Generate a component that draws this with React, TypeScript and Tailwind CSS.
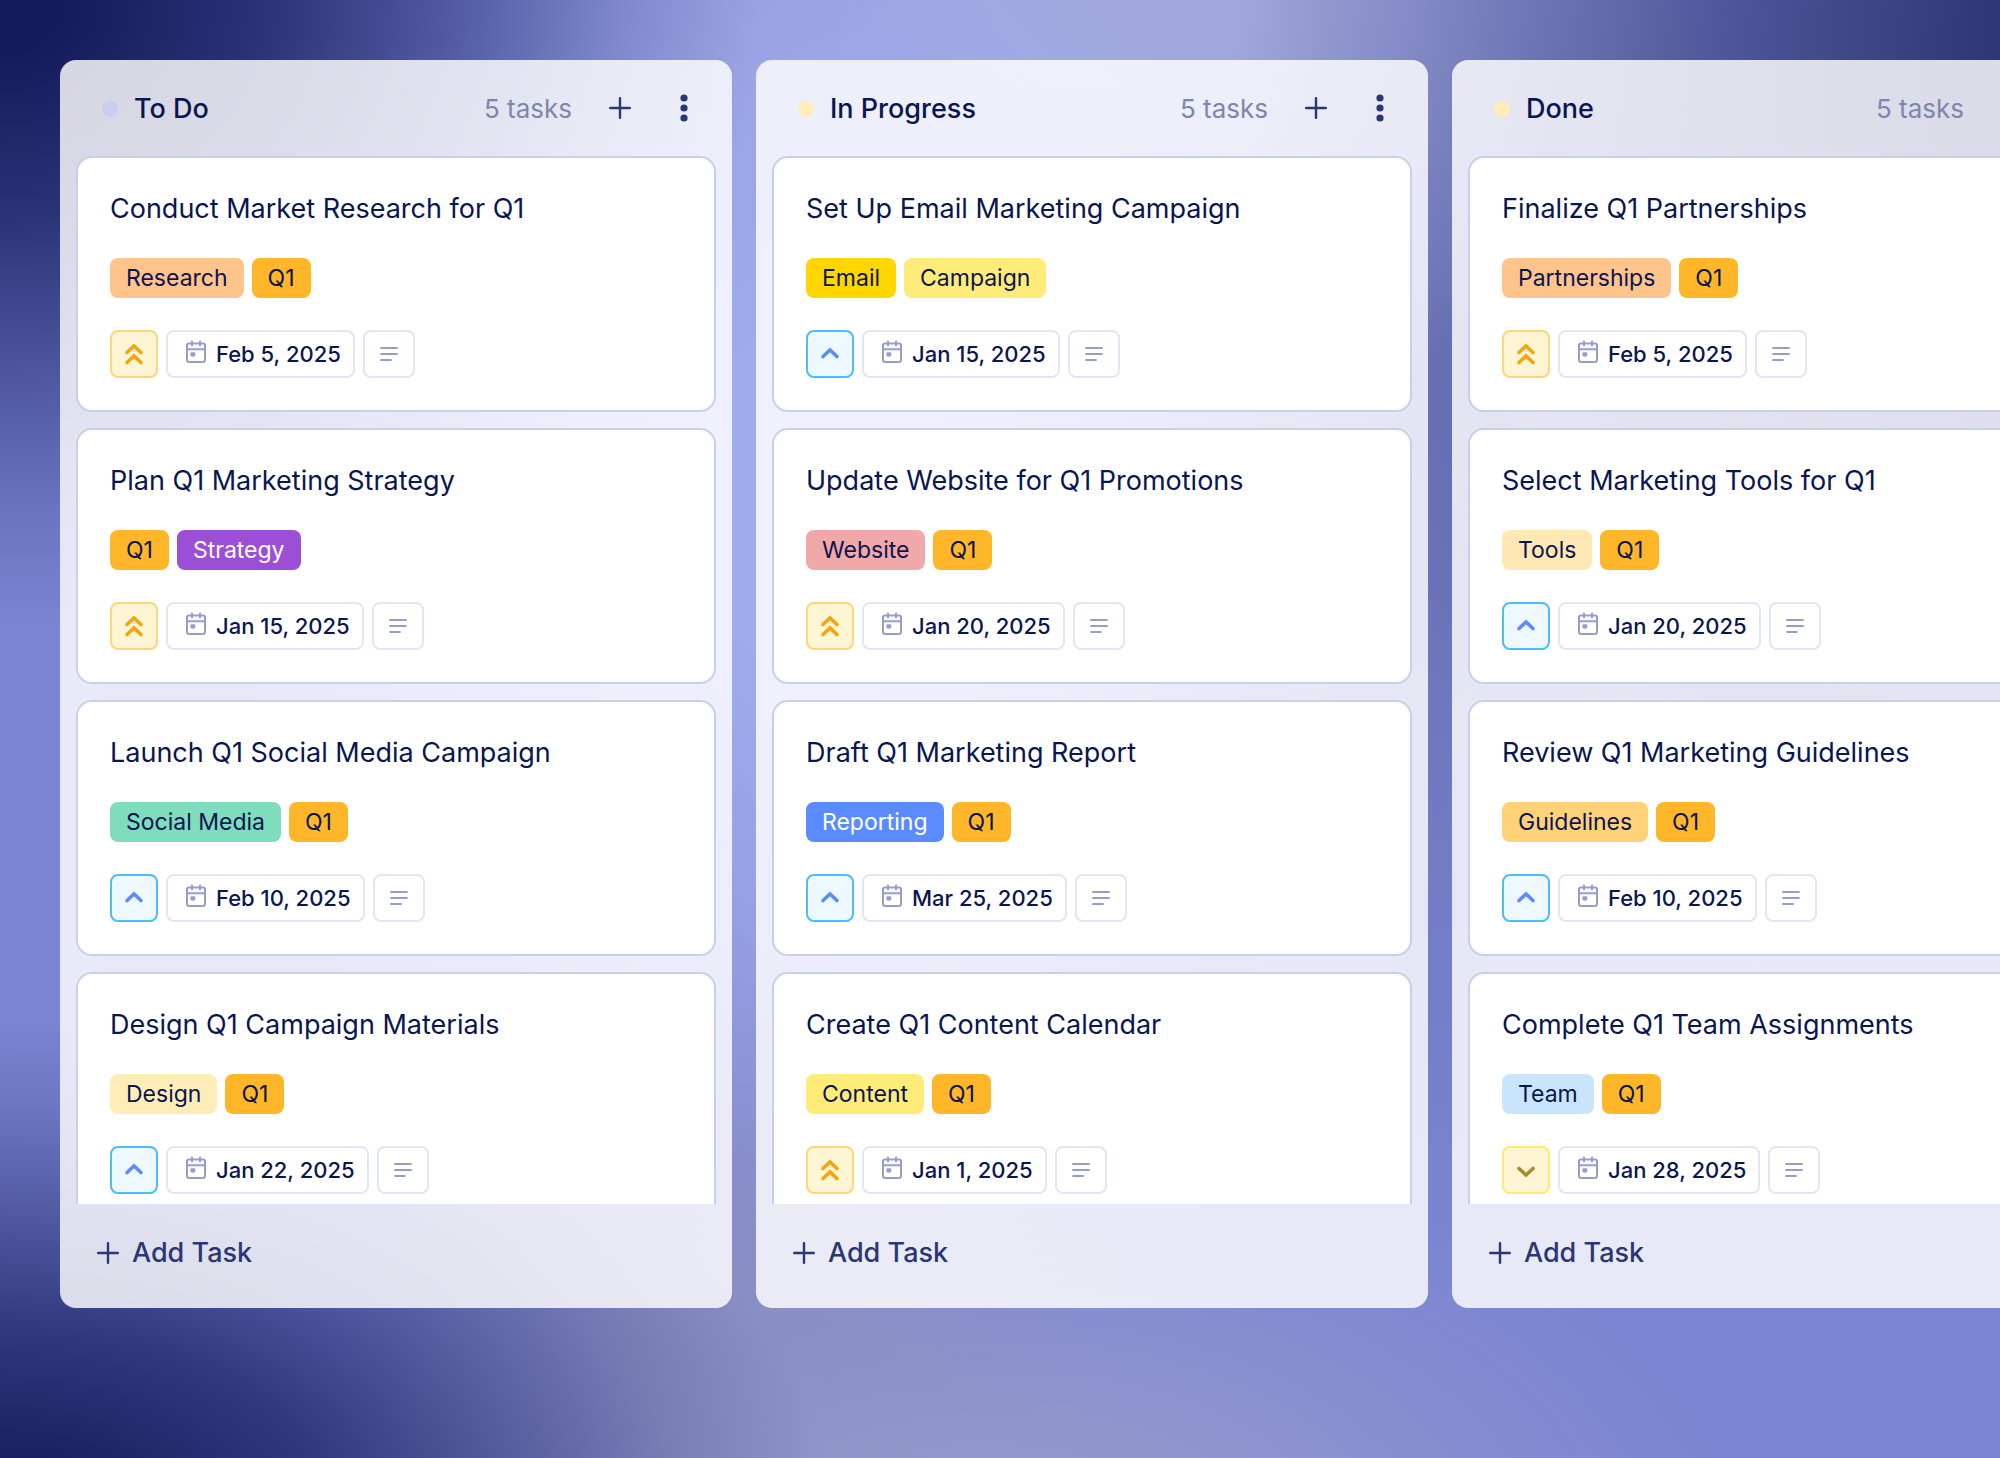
import { clsx } from "clsx";

type Priority = "high" | "medium" | "low";

interface Tag {
  label: string;
  className: string;
}

interface Task {
  title: string;
  tags: Tag[];
  priority: Priority;
  date: string;
}

interface Column {
  name: string;
  dot: string;
  tasks: Task[];
}

const Q1: Tag = { label: "Q1", className: "bg-[#ffb629]" };

const COLUMNS: Column[] = [
  {
    name: "To Do",
    dot: "bg-[#c8ceed]",
    tasks: [
      {
        title: "Conduct Market Research for Q1",
        tags: [{ label: "Research", className: "bg-[#ffc48c]" }, Q1],
        priority: "high",
        date: "Feb 5, 2025",
      },
      {
        title: "Plan Q1 Marketing Strategy",
        tags: [Q1, { label: "Strategy", className: "bg-[#9d4ed6] text-white" }],
        priority: "high",
        date: "Jan 15, 2025",
      },
      {
        title: "Launch Q1 Social Media Campaign",
        tags: [{ label: "Social Media", className: "bg-[#7fdcbc]" }, Q1],
        priority: "medium",
        date: "Feb 10, 2025",
      },
      {
        title: "Design Q1 Campaign Materials",
        tags: [{ label: "Design", className: "bg-[#ffedb8]" }, Q1],
        priority: "medium",
        date: "Jan 22, 2025",
      },
    ],
  },
  {
    name: "In Progress",
    dot: "bg-[#ffedb8]",
    tasks: [
      {
        title: "Set Up Email Marketing Campaign",
        tags: [
          { label: "Email", className: "bg-[#ffd600]" },
          { label: "Campaign", className: "bg-[#ffeb78]" },
        ],
        priority: "medium",
        date: "Jan 15, 2025",
      },
      {
        title: "Update Website for Q1 Promotions",
        tags: [{ label: "Website", className: "bg-[#f1a8a8]" }, Q1],
        priority: "high",
        date: "Jan 20, 2025",
      },
      {
        title: "Draft Q1 Marketing Report",
        tags: [{ label: "Reporting", className: "bg-[#5b8cff] text-white" }, Q1],
        priority: "medium",
        date: "Mar 25, 2025",
      },
      {
        title: "Create Q1 Content Calendar",
        tags: [{ label: "Content", className: "bg-[#ffeb78]" }, Q1],
        priority: "high",
        date: "Jan 1, 2025",
      },
    ],
  },
  {
    name: "Done",
    dot: "bg-[#ffedb8]",
    tasks: [
      {
        title: "Finalize Q1 Partnerships",
        tags: [{ label: "Partnerships", className: "bg-[#ffc48c]" }, Q1],
        priority: "high",
        date: "Feb 5, 2025",
      },
      {
        title: "Select Marketing Tools for Q1",
        tags: [{ label: "Tools", className: "bg-[#ffe8b3]" }, Q1],
        priority: "medium",
        date: "Jan 20, 2025",
      },
      {
        title: "Review Q1 Marketing Guidelines",
        tags: [{ label: "Guidelines", className: "bg-[#ffd27a]" }, Q1],
        priority: "medium",
        date: "Feb 10, 2025",
      },
      {
        title: "Complete Q1 Team Assignments",
        tags: [{ label: "Team", className: "bg-[#c8e5fd]" }, Q1],
        priority: "low",
        date: "Jan 28, 2025",
      },
    ],
  },
];

const PRIORITY_STYLES: Record<Priority, string> = {
  high: "border-[#ffd67a] bg-[#fdf5d3] text-[#f6a410]",
  medium: "border-[#4dbcfb] bg-[#edf8ff] text-[#5b8cff]",
  low: "border-[#ffe96e] bg-[#fdf5d3] text-[#ac8a2e]",
};

const PRIORITY_PATHS: Record<Priority, string> = {
  high: "M5 10.5l7-6.5 7 6.5M5 20.5l7-6.5 7 6.5",
  medium: "M5 14.5l7-6.5 7 6.5",
  low: "M5 10.5l7 6.5 7-6.5",
};

function PriorityIcon({ priority }: { priority: Priority }) {
  return (
    <svg viewBox="0 0 24 24" className="size-6" fill="none" stroke="currentColor" strokeWidth="3.6" strokeLinecap="round" strokeLinejoin="miter">
      <path d={PRIORITY_PATHS[priority]} />
    </svg>
  );
}

function CalendarIcon() {
  return (
    <svg viewBox="0 0 20 24" className="mb-1 h-6 w-5" fill="none" stroke="#969dc9" strokeWidth="2" strokeLinecap="round">
      <rect x="1" y="3.5" width="18" height="18.5" rx="2.2" />
      <path d="M1 9.3h18M6 1.5v4M14 1.5v4" />
      <rect x="5.4" y="13.2" width="3" height="2.2" rx="0.4" fill="#969dc9" />
    </svg>
  );
}

function PlusIcon() {
  return (
    <svg viewBox="0 0 22 22" className="size-[22px] shrink-0" fill="none" stroke="currentColor" strokeWidth="2.4" strokeLinecap="round">
      <path d="M11 1.2v19.6M1.2 11h19.6" />
    </svg>
  );
}

function MoreIcon() {
  return (
    <svg viewBox="0 0 8 28" className="h-7 w-2" fill="currentColor">
      <circle cx="4" cy="4" r="3.6" />
      <circle cx="4" cy="14" r="3.6" />
      <circle cx="4" cy="24" r="3.6" />
    </svg>
  );
}

function TaskCard({ task }: { task: Task }) {
  return (
    <article className="shrink-0 rounded-2xl border-2 border-[#c8ceed] bg-white p-8">
      <h3 className="text-[27px] leading-[38px]">{task.title}</h3>
      <div className="mt-[30px] flex gap-2">
        {task.tags.map((tag) => (
          <span key={tag.label} className={clsx("rounded-lg px-4 text-[23px] leading-10", tag.className)}>
            {tag.label}
          </span>
        ))}
      </div>
      <div className="mt-8 flex gap-2">
        <button type="button" aria-label="Priority" className={clsx("flex size-12 items-center justify-center rounded-lg border-2", PRIORITY_STYLES[task.priority])}>
          <PriorityIcon priority={task.priority} />
        </button>
        <button type="button" className="flex h-12 items-center gap-[10px] rounded-lg border-2 border-[#e3e5f5] pr-3 pl-[18px] text-[22px] leading-7 font-medium">
          <CalendarIcon />
          {task.date}
        </button>
        <button type="button" aria-label="Description" className="flex h-12 w-[52px] items-center justify-center rounded-lg border-2 border-[#e3e5f5]">
          <svg viewBox="0 0 18 14" className="h-[14px] w-[18px]" fill="none" stroke="#969dc9" strokeWidth="1.8" strokeLinecap="round">
            <path d="M1 1h16M1 7h16M1 13h10" />
          </svg>
        </button>
      </div>
    </article>
  );
}

function BoardColumn({ column }: { column: Column }) {
  return (
    <section className="flex w-[672px] shrink-0 flex-col rounded-2xl bg-white/82">
      <header className="flex h-24 shrink-0 items-center pr-6 pl-[42px] leading-9">
        <span className={clsx("mt-0.5 size-4 rounded-full", column.dot)} />
        <h2 className="mt-0.5 ml-4 text-[27px] font-medium">{column.name}</h2>
        <span className="mt-0.5 ml-auto text-[26px] text-[#8085ad]">5 tasks</span>
        <button type="button" aria-label="Add task" className="ml-6 flex size-12 items-center justify-center text-[#2b3674]">
          <PlusIcon />
        </button>
        <button type="button" aria-label="More options" className="ml-4 flex size-12 items-center justify-center text-[#2b3674]">
          <MoreIcon />
        </button>
      </header>
      <div className="flex min-h-0 flex-1 flex-col gap-4 overflow-hidden px-4">
        {column.tasks.map((task) => (
          <TaskCard key={task.title} task={task} />
        ))}
      </div>
      <footer className="shrink-0 px-[37px] pt-[25px] pb-[31px]">
        <button type="button" className="flex h-12 items-center gap-[13px] text-[27px] leading-9 font-medium text-[#2b3674]">
          <PlusIcon />
          Add Task
        </button>
      </footer>
    </section>
  );
}

export default function App() {
  return (
    <main className="flex h-screen gap-6 overflow-hidden bg-[#7a84d2] bg-[radial-gradient(ellipse_38%_43%_at_0%_0%,rgb(20_27_92)_8%,rgb(22_30_95/.8)_34%,rgb(24_32_98/.45)_60%,rgb(24_32_98/.16)_82%,transparent),radial-gradient(ellipse_42%_36%_at_0%_106%,rgb(24_31_96)_15%,rgb(24_31_96/.76)_40%,rgb(24_31_96/.44)_62%,rgb(24_31_96/.16)_82%,transparent),radial-gradient(ellipse_46%_70%_at_108%_4%,rgb(38_47_108)_10%,rgb(40_48_108/.72)_34%,rgb(44_52_110/.38)_60%,rgb(50_58_115/.15)_82%,transparent),radial-gradient(ellipse_30%_60%_at_40%_34%,rgb(161_172_236)_15%,rgb(161_172_236/.75)_45%,rgb(161_172_236/.3)_75%,transparent),radial-gradient(ellipse_32%_28%_at_56%_0%,rgb(160_166_218)_20%,transparent),radial-gradient(ellipse_38%_30%_at_50%_108%,rgb(150_155_204)_15%,transparent),radial-gradient(ellipse_30%_50%_at_70%_36%,rgb(98_106_168/.55)_15%,transparent),radial-gradient(ellipse_20%_30%_at_36%_88%,rgb(127_131_184/.9)_15%,transparent)] px-[60px] pt-[60px] pb-[150px] font-['Inter',sans-serif] text-[#0a1551]">
      {COLUMNS.map((column) => (
        <BoardColumn key={column.name} column={column} />
      ))}
    </main>
  );
}
